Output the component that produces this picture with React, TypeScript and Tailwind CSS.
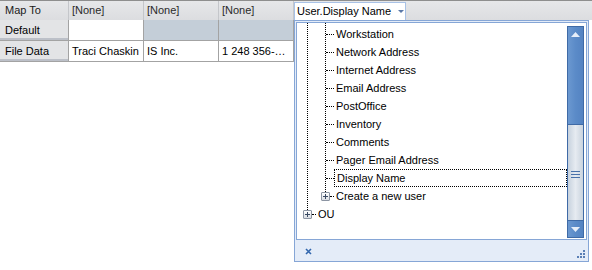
import React from "react";

const font = { fontFamily: '"Liberation Sans", Arial, sans-serif' };

function Leaf({ label, focus }: { label: string; focus?: boolean }) {
  return (
    <div className="relative h-[18px] flex items-center">
      <span className="absolute left-[29px] top-[9px] w-[8px] border-t border-dotted border-black" />
      {focus ? (
        <span className="absolute left-[37px] right-0 top-0 h-[18px] border border-dotted border-black flex items-center pl-[2px]">
          {label}
        </span>
      ) : (
        <span className="pl-[39px]">{label}</span>
      )}
    </div>
  );
}

function PlusBox({ left }: { left: string }) {
  return (
    <span
      className={`absolute ${left} top-[5px] w-[9px] h-[9px] border border-[#8c95a3] bg-gradient-to-b from-[#ffffff] to-[#d9dde3] rounded-[1px] flex items-center justify-center`}
    >
      <span className="relative w-[5px] h-[5px]">
        <span className="absolute left-0 top-[2px] w-[5px] h-[1px] bg-[#3a4a63]" />
        <span className="absolute left-[2px] top-0 w-[1px] h-[5px] bg-[#3a4a63]" />
      </span>
    </span>
  );
}

export default function App() {
  const leaves = [
    "Workstation",
    "Network Address",
    "Internet Address",
    "Email Address",
    "PostOffice",
    "Inventory",
    "Comments",
    "Pager Email Address",
  ];
  return (
    <div className="w-[592px] h-[270px] bg-white text-[11px] text-black overflow-hidden" style={font}>
      {/* header row */}
      <div className="flex h-[20px] border-t border-[#8e8e8e] bg-gradient-to-b from-[#e6e7e9] to-[#dcdde0]">
        <div className="w-[69px] border-r border-[#c4c6ca] flex items-center pl-[5px] text-[#1a1a1a]">Map To</div>
        <div className="w-[75px] border-r border-[#c4c6ca] flex items-center pl-[3px] text-[#2a2a2a]">[None]</div>
        <div className="w-[75px] border-r border-[#c4c6ca] flex items-center pl-[3px] text-[#2a2a2a]">[None]</div>
        <div className="w-[75px] border-r border-[#c4c6ca] flex items-center pl-[3px] text-[#2a2a2a]">[None]</div>
        <div className="w-[112px] mt-[1px] bg-white border border-b-0 border-[#a9c2e6] flex items-center pl-[2px] text-black">
          <span>User.Display Name</span>
          <svg className="ml-[7px]" width="6" height="4" viewBox="0 0 6 4">
            <path d="M0 0 L6 0 L3 3 Z" fill="#5a78a8" />
          </svg>
        </div>
        <div className="flex-1" />
      </div>

      <div className="flex">
        {/* left grid */}
        <div className="w-[294px] flex flex-col">
          <div className="flex h-[21px] border-b border-[#a3a3a3]">
            <div className="w-[69px] border-r border-[#a3a3a3] bg-[#e3e4e6] flex items-center pl-[5px] shadow-[inset_0_-2px_0_#bcc0c8]">Default</div>
            <div className="w-[75px] border-r border-[#a3a3a3] bg-white" />
            <div className="w-[75px] border-r border-[#a3a3a3] bg-[#c4ced8]" />
            <div className="w-[75px] border-r border-[#a3a3a3] bg-[#c4ced8]" />
          </div>
          <div className="flex h-[21px] border-b border-[#a3a3a3]">
            <div className="w-[69px] border-r border-[#a3a3a3] bg-[#e3e4e6] flex items-center pl-[5px] shadow-[inset_0_-2px_0_#bcc0c8]">File Data</div>
            <div className="w-[75px] border-r border-[#a3a3a3] bg-white flex items-center pl-[3px]">Traci Chaskin</div>
            <div className="w-[75px] border-r border-[#a3a3a3] bg-white flex items-center pl-[3px]">IS Inc.</div>
            <div className="w-[75px] border-r border-[#a3a3a3] bg-white flex items-center pl-[3px] whitespace-nowrap">1 248 356-…</div>
          </div>
        </div>

        {/* dropdown panel */}
        <div className="w-[295px] h-[242px] border border-[#86a6d6] bg-[#e4ecf8] flex flex-col">
          <div className="m-[1px] h-[218px] border border-[#86a6d6] bg-white flex">
            <div className="relative flex-1 pt-[2px]">
              <span className="absolute left-[10px] top-0 h-[191px] border-l border-dotted border-black" />
              <span className="absolute left-[28px] top-0 h-[173px] border-l border-dotted border-black" />
              {leaves.map((l) => (
                <Leaf key={l} label={l} />
              ))}
              <Leaf label="Display Name" focus />
              <div className="relative h-[18px] flex items-center">
                <PlusBox left="left-[24px]" />
                <span className="absolute left-[33px] top-[9px] w-[4px] border-t border-dotted border-black" />
                <span className="pl-[39px]">Create a new user</span>
              </div>
              <div className="relative h-[18px] flex items-center">
                <PlusBox left="left-[6px]" />
                <span className="absolute left-[15px] top-[9px] w-[4px] border-t border-dotted border-black" />
                <span className="pl-[21px]">OU</span>
              </div>
            </div>
            {/* scrollbar */}
            <div className="w-[17px] mt-[3px] mb-[1px] mr-[2px] flex flex-col border border-[#3f6aa6] bg-[#5b8bc8]">
              <div className="h-[97px] bg-gradient-to-r from-[#6b98d0] via-[#5b8bc8] to-[#5483c2] flex justify-center pt-[5px]">
                <svg width="9" height="5" viewBox="0 0 9 5">
                  <path d="M0 5 L4.5 0 L9 5 Z" fill="#e6eef9" />
                </svg>
              </div>
              <div className="h-[97px] border-y border-[#3f6aa6] bg-gradient-to-r from-[#c7d2de] via-[#e6ebf1] to-[#c9d3de] flex flex-col items-center justify-center pt-[4px] gap-[2px]">
                <span className="w-[9px] h-[1px] bg-[#4a72aa]" />
                <span className="w-[9px] h-[1px] bg-[#4a72aa]" />
                <span className="w-[9px] h-[1px] bg-[#4a72aa]" />
              </div>
              <div className="flex-1 bg-gradient-to-r from-[#6b98d0] via-[#5b8bc8] to-[#5483c2] flex justify-center items-center">
                <svg width="9" height="5" viewBox="0 0 9 5">
                  <path d="M0 0 L9 0 L4.5 5 Z" fill="#e6eef9" />
                </svg>
              </div>
            </div>
          </div>
          <div className="flex-1 flex items-center justify-between pl-[10px] pr-[2px]">
            <svg width="7" height="7" viewBox="0 0 7 7">
              <path d="M1 1 L6 6 M6 1 L1 6" stroke="#3266ad" strokeWidth="1.6" />
            </svg>
            <svg width="10" height="10" viewBox="0 0 10 10" className="mt-[6px]">
              <rect x="7" y="1" width="2" height="2" fill="#5a7fb5" />
              <rect x="4" y="4" width="2" height="2" fill="#5a7fb5" />
              <rect x="7" y="4" width="2" height="2" fill="#5a7fb5" />
              <rect x="1" y="7" width="2" height="2" fill="#5a7fb5" />
              <rect x="4" y="7" width="2" height="2" fill="#5a7fb5" />
              <rect x="7" y="7" width="2" height="2" fill="#5a7fb5" />
            </svg>
          </div>
        </div>
      </div>
    </div>
  );
}
